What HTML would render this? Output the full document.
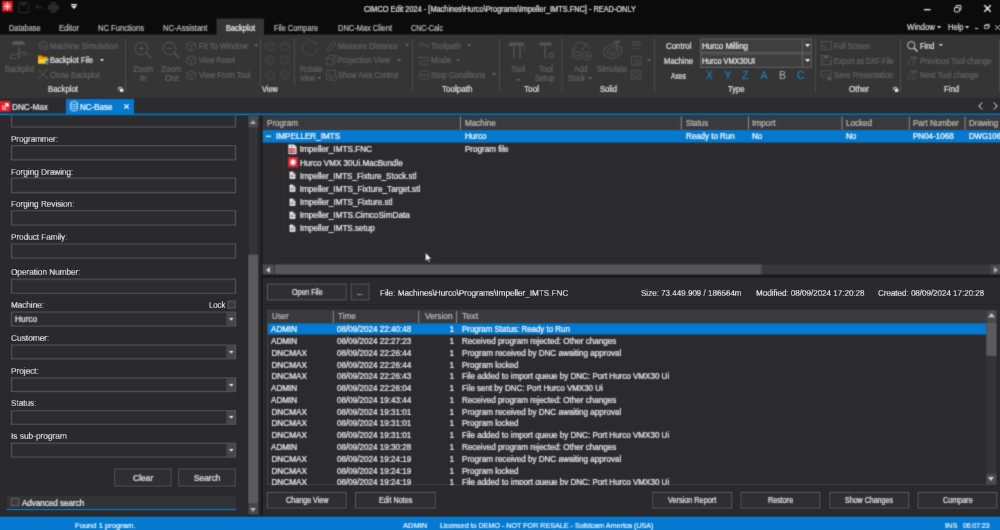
<!DOCTYPE html>
<html lang="en"><head><meta charset="utf-8"><title>CIMCO Edit 2024</title>
<style>
html,body{margin:0;padding:0}
body{width:1000px;height:530px;background:#2a2a2d;overflow:hidden;position:relative;font-family:"Liberation Sans",sans-serif}
#root{position:absolute;left:0;top:0;width:1000px;height:530px;overflow:hidden;filter:url(#soft)}
.a{position:absolute;box-sizing:border-box}
.t{position:absolute;white-space:nowrap;line-height:1;transform-origin:0 50%;-webkit-text-stroke:.22px currentColor}
svg{overflow:visible}
.n{-webkit-text-stroke:0}
</style></head><body><svg width="0" height="0" style="position:absolute"><defs><filter id="soft" x="0" y="0" width="100%" height="100%" color-interpolation-filters="sRGB"><feConvolveMatrix order="3" kernelMatrix="0.0324 0.1152 0.0324 0.1152 0.4096 0.1152 0.0324 0.1152 0.0324" divisor="1" edgeMode="duplicate" preserveAlpha="true"/></filter></defs></svg>
<div id="root">
<svg class="a" style="left:0px;top:0px" width="1000" height="35"><rect x="0" y="0" width="1000" height="35" fill="#0b0b0b"/></svg>
<svg class="a" style="left:1.6px;top:1.4px;" width="10.6" height="10.5" viewBox="0 0 10.6 10.5"><rect width="10.600" height="10.500" fill="#e0131f"/><g stroke="#fff" stroke-width=".85" stroke-linecap="round"><path d="M5.300 2v6.500M2.100 5.250h6.400M3 3l4.600 4.500M7.600 3L3 7.500"/></g><g fill="#fff"><circle cx="5.300" cy="1.700" r=".6"/><circle cx="5.300" cy="8.800" r=".6"/><circle cx="1.800" cy="5.250" r=".6"/><circle cx="8.800" cy="5.250" r=".6"/><circle cx="2.800" cy="2.800" r=".55"/><circle cx="7.800" cy="2.800" r=".55"/><circle cx="2.800" cy="7.700" r=".55"/><circle cx="7.800" cy="7.700" r=".55"/></g></svg>
<svg class="a" style="left:18px;top:2px;" width="11" height="11" viewBox="0 0 11 11"><path d="M1 .5h8l1.5 1.5v8.5h-9.500z" fill="none" stroke="#262626" stroke-width="1"/><rect x="3" y="1" width="5" height="2.500" fill="#262626"/></svg>
<svg class="a" style="left:35px;top:4px;" width="8" height="6" viewBox="0 0 8 6"><path d="M3 0.500L.7 3l2.300 2.500M.7 3h5a2 2 0 0 1 2 2" fill="none" stroke="#303030" stroke-width="1"/></svg>
<svg class="a" style="left:48px;top:2px;" width="11" height="11" viewBox="0 0 11 11"><rect x="0" y="3" width="11" height="5" rx="1" fill="#2b2b2b"/><rect x="2.500" y="0" width="6" height="3" fill="#242424"/><rect x="2.500" y="7" width="6" height="4" fill="#242424"/></svg>
<svg class="a" style="left:71px;top:3.5px;" width="6" height="5" viewBox="0 0 6 5"><rect x="0" y="0" width="6" height="1.200" fill="#eee"/><path d="M0 1.800h6l-3 3.200z" fill="#eee"/></svg>
<span class="t " style="left:364px;top:5px;font-size:8.3px;color:#e4e4e4;transform:scaleX(0.8886);">CIMCO Edit 2024 - [Machines\Hurco\Programs\Impeller_IMTS.FNC] - READ-ONLY</span>
<svg class="a" style="left:924px;top:9px" width="7" height="2"><rect x="0" y="0" width="6.5" height="1.3" fill="#f0f0f0"/></svg>
<svg class="a" style="left:954px;top:5.3px;" width="7.4" height="7.4" viewBox="0 0 7.4 7.4"><path d="M2.300 2V.5h4.600v4.400h-1.400" fill="none" stroke="#ddd" stroke-width="1"/><rect x=".5" y="2.500" width="4.800" height="4.400" rx=".5" fill="none" stroke="#ddd" stroke-width="1"/></svg>
<svg class="a" style="left:984px;top:5px;" width="7" height="7" viewBox="0 0 7 7"><path d="M.3 .3l6.400 6.400M6.700 .3L.3 6.700" stroke="#fff" stroke-width="1.300"/></svg>
<svg class="a" style="left:216px;top:18px" width="48" height="18"><rect x="0.5" y="0.5" width="47.5" height="17" fill="#353535"/></svg>
<span class="t " style="left:8.5px;top:24px;font-size:8.3px;color:#bebebe;transform:scaleX(0.8865);">Database</span>
<span class="t " style="left:59px;top:24px;font-size:8.3px;color:#bebebe;transform:scaleX(0.9224);">Editor</span>
<span class="t " style="left:98px;top:24px;font-size:8.3px;color:#bebebe;transform:scaleX(0.9149);">NC Functions</span>
<span class="t " style="left:163px;top:24px;font-size:8.3px;color:#bebebe;transform:scaleX(0.9189);">NC-Assistant</span>
<span class="t " style="left:226px;top:24px;font-size:8.3px;color:#f0f0f0;transform:scaleX(0.9109);">Backplot</span>
<span class="t " style="left:274px;top:24px;font-size:8.3px;color:#bebebe;transform:scaleX(0.8832);">File Compare</span>
<span class="t " style="left:338px;top:24px;font-size:8.3px;color:#bebebe;transform:scaleX(0.9007);">DNC-Max Client</span>
<span class="t " style="left:411px;top:24px;font-size:8.3px;color:#bebebe;transform:scaleX(0.8567);">CNC-Calc</span>
<span class="t " style="left:907px;top:23px;font-size:8.3px;color:#dcdcdc;transform:scaleX(0.9485);">Window</span>
<span class="t " style="left:947.5px;top:23px;font-size:8.3px;color:#dcdcdc;transform:scaleX(0.9080);">Help</span>
<svg class="a" style="left:937px;top:25.95px;" width="4.2" height="2.5" viewBox="0 0 4.2 2.5"><path d="M0 0h4.2l-2.1 2.5z" fill="#dcdcdc"/></svg>
<svg class="a" style="left:965px;top:25.95px;" width="4.2" height="2.5" viewBox="0 0 4.2 2.5"><path d="M0 0h4.2l-2.1 2.5z" fill="#dcdcdc"/></svg>
<svg class="a" style="left:975px;top:28px" width="4" height="1"><rect x="0" y="0" width="3.2" height="1" fill="#ccc"/></svg>
<svg class="a" style="left:984px;top:24px;" width="6" height="5" viewBox="0 0 6 5"><path d="M1.500 1.300V.5h3.800v3h-.8" fill="none" stroke="#ccc" stroke-width=".8"/><rect x=".4" y="1.500" width="3.800" height="3" fill="none" stroke="#ccc" stroke-width=".8"/></svg>
<svg class="a" style="left:995px;top:24.5px;" width="5" height="5" viewBox="0 0 5 5"><path d="M.3 .3l4.400 4.400M4.700 .3L.3 4.700" stroke="#ddd" stroke-width="1"/></svg>
<svg class="a" style="left:0px;top:34px" width="1000" height="64"><rect x="0" y="0.5" width="1000" height="63.5" fill="#353535"/></svg>
<svg class="a" style="left:125px;top:39px" width="1" height="53"><rect x="0" y="0" width="1" height="53" fill="#4b4b4b"/></svg>
<svg class="a" style="left:412px;top:39px" width="1" height="53"><rect x="0" y="0" width="1" height="53" fill="#4b4b4b"/></svg>
<svg class="a" style="left:499px;top:39px" width="1" height="53"><rect x="0" y="0" width="1" height="53" fill="#4b4b4b"/></svg>
<svg class="a" style="left:561px;top:39px" width="2" height="53"><rect x="0.5" y="0" width="1" height="53" fill="#4b4b4b"/></svg>
<svg class="a" style="left:654px;top:39px" width="1" height="53"><rect x="0" y="0" width="1" height="53" fill="#4b4b4b"/></svg>
<svg class="a" style="left:815px;top:39px" width="1" height="53"><rect x="0" y="0" width="1" height="53" fill="#4b4b4b"/></svg>
<svg class="a" style="left:900px;top:39px" width="1" height="53"><rect x="0" y="0" width="1" height="53" fill="#4b4b4b"/></svg>
<svg class="a" style="left:999px;top:39px" width="1" height="53"><rect x="0" y="0" width="1" height="53" fill="#4b4b4b"/></svg>
<svg class="a" style="left:260px;top:38px" width="1" height="47"><rect x="0" y="0.5" width="1" height="46" fill="#4b4b4b"/></svg>
<svg class="a" style="left:294px;top:38px" width="1" height="47"><rect x="0" y="0.5" width="1" height="46" fill="#4b4b4b"/></svg>
<span class="t " style="left:5px;top:65px;font-size:8.3px;color:#636363;transform:scaleX(0.9109);">Backplot</span>
<span class="t " style="left:50px;top:42px;font-size:8.3px;color:#636363;transform:scaleX(0.9388);">Machine Simulation</span>
<span class="t " style="left:50px;top:56px;font-size:8.3px;color:#e6e6e6;transform:scaleX(0.9050);">Backplot File</span>
<svg class="a" style="left:99.5px;top:58.8px;" width="4" height="2.4" viewBox="0 0 4 2.4"><path d="M0 0h4l-2.0 2.4z" fill="#e0e0e0"/></svg>
<span class="t " style="left:50px;top:71px;font-size:8.3px;color:#636363;transform:scaleX(0.8941);">Close Backplot</span>
<span class="t " style="left:48px;top:85px;font-size:8.3px;color:#e0e0e0;transform:scaleX(0.9424);">Backplot</span>
<svg class="a" style="left:10px;top:40px;" width="18" height="20" viewBox="0 0 18 20"><path d="M3.300 1.200h10.400l1.300 3.600h-13z" fill="#5a5a5a"/><path d="M8.900 6.800v11.800" stroke="#525252" stroke-width="1.700"/><path d="M8.900 12.500h6.800a1.250 1.250 0 0 1 0 2.500h-4.500M8.900 14.500h-6.400a2 2 0 0 0 0 4h4.500" fill="none" stroke="#525252" stroke-width="1.100"/></svg>
<svg class="a" style="left:38px;top:41px;" width="10.5" height="10.5" viewBox="0 0 10.5 10.5"><path d="M1 2l4-1.500 4.500 2.500v4.500l-4 2-4.500-3z" fill="none" stroke="#565656" stroke-width=".9"/><circle cx="3.800" cy="4.500" r="1.200" fill="none" stroke="#565656" stroke-width=".7"/><circle cx="6.800" cy="6.200" r="1.200" fill="none" stroke="#565656" stroke-width=".7"/></svg>
<svg class="a" style="left:38px;top:55px;" width="11" height="10" viewBox="0 0 11 10"><path d="M0 .6h3.800l1 1.200h4.700v2h-9.500z" fill="#d9a000"/><path d="M0 8.400V2.500h1l.8 1h8.700l-1.800 4.900z" fill="#f2b800"/><path d="M0 8.400l1.900-4.400h8.900l-2 4.400z" fill="#ffca28"/><rect x="7.500" y="5.600" width="3.200" height="3.200" fill="#1d7fd6"/><path d="M9.100 8.800v1.200" stroke="#aaa" stroke-width=".8"/></svg>
<svg class="a" style="left:38.3px;top:69.2px;" width="10" height="10" viewBox="0 0 10 10"><path d="M0 0l10 10M10 0L0 10" stroke="#565656" stroke-width=".9"/></svg>
<svg class="a" style="left:117.5px;top:86.5px;" width="5.5" height="5" viewBox="0 0 5.5 5"><path d="M.4 3V.4h3.600" fill="none" stroke="#d8d8d8" stroke-width=".8"/><rect x="1.800" y="1.600" width="3.500" height="3.300" fill="#eee"/></svg>
<svg class="a" style="left:134.4px;top:40.5px;" width="18" height="18" viewBox="0 0 18 18"><circle cx="7.500" cy="7.500" r="6.300" fill="none" stroke="#565656" stroke-width="1"/><path d="M12 12l5.200 5.200" stroke="#565656" stroke-width="1.300"/><path d="M4.600 7.500h5.800" stroke="#565656" stroke-width=".9"/><path d="M7.500 4.600v5.800" stroke="#565656" stroke-width=".9"/></svg>
<svg class="a" style="left:161.9px;top:40.5px;" width="18" height="18" viewBox="0 0 18 18"><circle cx="7.500" cy="7.500" r="6.300" fill="none" stroke="#565656" stroke-width="1"/><path d="M12 12l5.200 5.200" stroke="#565656" stroke-width="1.300"/><path d="M4.600 7.500h5.800" stroke="#565656" stroke-width=".9"/></svg>
<span class="t " style="left:133px;top:65px;font-size:8.3px;color:#636363;transform:scaleX(0.9662);">Zoom</span>
<span class="t " style="left:140.3px;top:74px;font-size:8.3px;color:#636363;transform:scaleX(0.9679);">In</span>
<span class="t " style="left:160.5px;top:65px;font-size:8.3px;color:#636363;transform:scaleX(0.9662);">Zoom</span>
<span class="t " style="left:164.5px;top:74px;font-size:8.3px;color:#636363;transform:scaleX(1.0091);">Out</span>
<svg class="a" style="left:186px;top:41px;" width="10.5" height="10.5" viewBox="0 0 10 10"><path d="M5 .6l4.200 2.200v4.600L5 9.600.8 7.400V2.800z" fill="none" stroke="#565656" stroke-width=".8"/><path d="M.8 2.800L5 5l4.200-2.200M5 5v4.600" fill="none" stroke="#565656" stroke-width=".7"/></svg>
<svg class="a" style="left:186px;top:55px;" width="10.5" height="10.5" viewBox="0 0 10 10"><path d="M5 .6l4.200 2.200v4.600L5 9.600.8 7.400V2.800z" fill="none" stroke="#565656" stroke-width=".8"/><path d="M.8 2.800L5 5l4.200-2.200M5 5v4.600" fill="none" stroke="#565656" stroke-width=".7"/></svg>
<svg class="a" style="left:186px;top:69.5px;" width="10.5" height="10.5" viewBox="0 0 10 10"><path d="M5 .6l4.200 2.200v4.600L5 9.600.8 7.400V2.800z" fill="none" stroke="#565656" stroke-width=".8"/><path d="M.8 2.800L5 5l4.200-2.200M5 5v4.600" fill="none" stroke="#565656" stroke-width=".7"/></svg>
<span class="t " style="left:198.5px;top:42px;font-size:8.3px;color:#636363;transform:scaleX(0.9332);">Fit To Window</span>
<svg class="a" style="left:253.5px;top:44.15px;" width="4.2" height="2.5" viewBox="0 0 4.2 2.5"><path d="M0 0h4.2l-2.1 2.5z" fill="#636363"/></svg>
<span class="t " style="left:198.5px;top:56px;font-size:8.3px;color:#636363;transform:scaleX(0.8606);">View Reset</span>
<span class="t " style="left:198.5px;top:71px;font-size:8.3px;color:#636363;transform:scaleX(0.9052);">View From Tool</span>
<svg class="a" style="left:264.5px;top:41px;" width="10" height="10" viewBox="0 0 10 10"><path d="M5 .6l4.200 2.200v4.600L5 9.600.8 7.400V2.800z" fill="none" stroke="#4b4b4b" stroke-width=".8"/><path d="M.8 2.800L5 5l4.200-2.200M5 5v4.600" fill="none" stroke="#4b4b4b" stroke-width=".7"/></svg>
<svg class="a" style="left:264.5px;top:55px;" width="10" height="10" viewBox="0 0 10 10"><path d="M5 .6l4.200 2.200v4.600L5 9.600.8 7.400V2.800z" fill="none" stroke="#4b4b4b" stroke-width=".8"/><path d="M.8 2.800L5 5l4.200-2.200M5 5v4.600" fill="none" stroke="#4b4b4b" stroke-width=".7"/></svg>
<svg class="a" style="left:264.5px;top:69.5px;" width="10" height="10" viewBox="0 0 10 10"><path d="M5 .6l4.200 2.200v4.600L5 9.600.8 7.400V2.800z" fill="none" stroke="#4b4b4b" stroke-width=".8"/><path d="M5 2.500V5.500l-3 1.500" fill="none" stroke="#4b4b4b" stroke-width=".7"/></svg>
<svg class="a" style="left:279.5px;top:41px;" width="10" height="10" viewBox="0 0 10 10"><path d="M5 .6l4.200 2.200v4.600L5 9.600.8 7.400V2.800z" fill="none" stroke="#4b4b4b" stroke-width=".8"/><path d="M.8 4.800L5 2.800l4.200 2" fill="none" stroke="#4b4b4b" stroke-width=".7"/></svg>
<svg class="a" style="left:279.5px;top:55px;" width="10" height="10" viewBox="0 0 10 10"><path d="M5 .6l4.200 2.200v4.600L5 9.600.8 7.400V2.800z" fill="none" stroke="#4b4b4b" stroke-width=".8"/><path d="M5 2.500V5.500l3 1.500" fill="none" stroke="#4b4b4b" stroke-width=".7"/></svg>
<svg class="a" style="left:279.5px;top:69.5px;" width="10" height="10" viewBox="0 0 10 10"><path d="M5 .6l4.200 2.200v4.600L5 9.600.8 7.400V2.800z" fill="none" stroke="#4b4b4b" stroke-width=".8"/><path d="M.8 2.800L5 5l4.200-2.200M5 5v4.600" fill="none" stroke="#4b4b4b" stroke-width=".7"/></svg>
<svg class="a" style="left:301px;top:40px;" width="19" height="18" viewBox="0 0 19 18"><path d="M14.800 3.500A7.300 7.300 0 1 0 16.300 9" fill="none" stroke="#4b4b4b" stroke-width=".9"/><path d="M12 3.800h3.300V.6" fill="none" stroke="#4b4b4b" stroke-width=".9"/></svg>
<span class="t " style="left:299.5px;top:65px;font-size:8.3px;color:#636363;transform:scaleX(0.9201);">Rotate</span>
<span class="t " style="left:299.5px;top:74px;font-size:8.3px;color:#636363;transform:scaleX(0.8408);">View</span>
<svg class="a" style="left:316.5px;top:77.45px;" width="4.2" height="2.5" viewBox="0 0 4.2 2.5"><path d="M0 0h4.2l-2.1 2.5z" fill="#636363"/></svg>
<svg class="a" style="left:326px;top:41px;" width="10.5" height="10.5" viewBox="0 0 10.5 10.5"><path d="M.6 7.600L7.600.6l2.300 2.300-7 7z" fill="none" stroke="#565656" stroke-width=".9"/></svg>
<svg class="a" style="left:326px;top:55px;" width="10.5" height="10.5" viewBox="0 0 10.5 10.5"><path d="M.5 3.500h6.500v6.500h-6.500zM.5 3.500l3-3h6.500v6.500l-3 3M7 3.500l3-3" fill="none" stroke="#565656" stroke-width=".8"/></svg>
<svg class="a" style="left:326px;top:69.5px;" width="10.5" height="10.5" viewBox="0 0 10.5 10.5"><rect x=".5" y=".5" width="9" height="9.500" fill="none" stroke="#565656" stroke-width=".8"/><path d="M3.500 2.500v5h4.500" fill="none" stroke="#565656" stroke-width=".8"/><rect x="6.800" y="6.800" width="3.500" height="3.500" fill="#353535" stroke="#565656" stroke-width=".6"/></svg>
<span class="t " style="left:338px;top:42px;font-size:8.3px;color:#636363;transform:scaleX(0.8970);">Measure Distance</span>
<svg class="a" style="left:405px;top:44.15px;" width="4.2" height="2.5" viewBox="0 0 4.2 2.5"><path d="M0 0h4.2l-2.1 2.5z" fill="#636363"/></svg>
<span class="t " style="left:338px;top:56px;font-size:8.3px;color:#636363;transform:scaleX(0.9114);">Projection View</span>
<svg class="a" style="left:397px;top:58.75px;" width="4.2" height="2.5" viewBox="0 0 4.2 2.5"><path d="M0 0h4.2l-2.1 2.5z" fill="#636363"/></svg>
<span class="t " style="left:338px;top:71px;font-size:8.3px;color:#636363;transform:scaleX(0.8982);">Show Axis Control</span>
<span class="t " style="left:262px;top:85px;font-size:8.3px;color:#e0e0e0;transform:scaleX(0.8968);">View</span>
<svg class="a" style="left:419px;top:41.5px;" width="10.5" height="8" viewBox="0 0 10.5 8"><path d="M.5 2.500c0-1.800 2.500-2.400 4-.8l2 3c1.500 1.600 3.500 1 3.500-.8M.5 2.500c0 1.800 2 2.400 3.500 1.200M10 3.900c0-1.800-2-2.400-3.500-1.200" fill="none" stroke="#565656" stroke-width=".9"/></svg>
<svg class="a" style="left:419px;top:55.5px;" width="10.5" height="9" viewBox="0 0 10.5 9"><path d="M.5 1.500h7a1.800 1.800 0 0 1 0 3.600h-5a1.800 1.800 0 0 0 0 3.600h7" fill="none" stroke="#565656" stroke-width=".9"/><path d="M.5 .3v2.400" stroke="#565656" stroke-width=".9"/></svg>
<svg class="a" style="left:419px;top:69.5px;" width="10.5" height="10.5" viewBox="0 0 10.5 10.5"><circle cx="5.200" cy="5.200" r="4.600" fill="none" stroke="#565656" stroke-width=".9"/><path d="M2.500 5.200h5.400" stroke="#565656" stroke-width="1"/></svg>
<span class="t " style="left:431px;top:42px;font-size:8.3px;color:#636363;transform:scaleX(0.9560);">Toolpath</span>
<svg class="a" style="left:466.5px;top:43.95px;" width="4.2" height="2.5" viewBox="0 0 4.2 2.5"><path d="M0 0h4.2l-2.1 2.5z" fill="#636363"/></svg>
<span class="t " style="left:431px;top:56px;font-size:8.3px;color:#636363;transform:scaleX(0.9633);">Mode</span>
<svg class="a" style="left:456px;top:58.75px;" width="4.2" height="2.5" viewBox="0 0 4.2 2.5"><path d="M0 0h4.2l-2.1 2.5z" fill="#636363"/></svg>
<span class="t " style="left:431px;top:71px;font-size:8.3px;color:#636363;transform:scaleX(0.9300);">Stop Conditions</span>
<svg class="a" style="left:491.5px;top:72.65px;" width="4.2" height="2.5" viewBox="0 0 4.2 2.5"><path d="M0 0h4.2l-2.1 2.5z" fill="#636363"/></svg>
<span class="t " style="left:442px;top:85px;font-size:8.3px;color:#e0e0e0;transform:scaleX(0.9719);">Toolpath</span>
<svg class="a" style="left:508px;top:40.5px;" width="18" height="18" viewBox="0 0 18 18"><path d="M2 1.500h13l1.500 3H.5z" fill="#565656"/><path d="M6 5v12M12 5v12" stroke="#4d4d4d" stroke-width="1.900"/><path d="M.5 4.500h4M13 4.500c3 0 4.500 1 4.500 3l-2 2" fill="none" stroke="#565656" stroke-width=".8"/></svg>
<svg class="a" style="left:538.5px;top:40.5px;" width="18" height="18" viewBox="0 0 18 18"><path d="M1 1.500h11l1 3H0z" fill="#565656"/><path d="M6 5v12" stroke="#4d4d4d" stroke-width="1.900"/><circle cx="12.500" cy="14.500" r="2.600" fill="none" stroke="#565656" stroke-width="1.400" stroke-dasharray="1.300 .9"/><circle cx="12.500" cy="14.500" r="1.800" fill="none" stroke="#565656" stroke-width=".6"/></svg>
<span class="t " style="left:511px;top:65px;font-size:8.3px;color:#636363;transform:scaleX(0.9194);">Tool</span>
<svg class="a" style="left:515.5px;top:79.25px;" width="4.2" height="2.5" viewBox="0 0 4.2 2.5"><path d="M0 0h4.2l-2.1 2.5z" fill="#636363"/></svg>
<span class="t " style="left:538.5px;top:65px;font-size:8.3px;color:#636363;transform:scaleX(0.9194);">Tool</span>
<span class="t " style="left:535px;top:74px;font-size:8.3px;color:#636363;transform:scaleX(0.8990);">Setup</span>
<span class="t " style="left:524px;top:85px;font-size:8.3px;color:#e0e0e0;transform:scaleX(0.9851);">Tool</span>
<svg class="a" style="left:571px;top:40px;" width="21" height="21" viewBox="0 0 21 21"><path d="M1.500 10L7 1.800l8 2 3.500 4.500M1.500 10l8 3 5.500-9.200M1.500 10v6.500l7.500 3.300M9.500 13v3.500M2 13.500l7.500 3" fill="none" stroke="#565656" stroke-width=".9"/><circle cx="15.800" cy="16" r="4.300" fill="#353535" stroke="#565656" stroke-width=".9"/><path d="M13.600 16h4.400M15.800 13.800v4.400" stroke="#565656" stroke-width=".9"/></svg>
<svg class="a" style="left:603px;top:40px;" width="20" height="20" viewBox="0 0 20 20"><path d="M.8 9l8.200-5.500 9.300 3.500v6.500l-9 5.500-8.500-4z" fill="none" stroke="#565656" stroke-width=".9"/><path d="M4 10.500l6-3.500 5.500 2.500v2.500l-6 3.500-5.500-2.500z" fill="none" stroke="#565656" stroke-width=".8"/><path d="M4 10.500l5.500 2.500 6-3.500M9.500 13v2.500" fill="none" stroke="#565656" stroke-width=".6"/><rect x="11" y=".8" width="6.200" height="2" fill="#565656"/><path d="M14 3v7" stroke="#565656" stroke-width="1"/></svg>
<span class="t " style="left:573.5px;top:65px;font-size:8.3px;color:#636363;transform:scaleX(0.9141);">Add</span>
<span class="t " style="left:568px;top:74px;font-size:8.3px;color:#636363;transform:scaleX(0.8189);">Stock</span>
<svg class="a" style="left:587.5px;top:76.65px;" width="4.2" height="2.5" viewBox="0 0 4.2 2.5"><path d="M0 0h4.2l-2.1 2.5z" fill="#636363"/></svg>
<span class="t " style="left:597px;top:65px;font-size:8.3px;color:#636363;transform:scaleX(0.9290);">Simulate</span>
<span class="t " style="left:600px;top:85px;font-size:8.3px;color:#e0e0e0;transform:scaleX(0.9211);">Solid</span>
<svg class="a" style="left:631px;top:41px;" width="10.5" height="9" viewBox="0 0 10.5 9"><circle cx="3" cy="2.500" r="2" fill="none" stroke="#565656" stroke-width=".8"/><circle cx="7.500" cy="2.500" r="2" fill="none" stroke="#565656" stroke-width=".8"/><path d="M1.500 7.500h7.500" stroke="#565656" stroke-width=".8" stroke-dasharray="1.500 1"/></svg>
<svg class="a" style="left:631px;top:55.5px;" width="10.5" height="10" viewBox="0 0 10.5 10"><rect x=".5" y=".5" width="9.500" height="8.500" fill="none" stroke="#565656" stroke-width=".8"/><circle cx="5.500" cy="5" r="2" fill="none" stroke="#565656" stroke-width=".8"/><path d="M7 6.500l2 2" stroke="#565656" stroke-width=".8"/></svg>
<svg class="a" style="left:631px;top:70px;" width="10.5" height="10" viewBox="0 0 10.5 10"><rect x=".5" y=".5" width="9.500" height="8.500" fill="none" stroke="#565656" stroke-width=".8"/><circle cx="5.200" cy="4.800" r="2.600" fill="none" stroke="#565656" stroke-width=".8"/></svg>
<svg class="a" style="left:646.5px;top:58.75px;" width="4.2" height="2.5" viewBox="0 0 4.2 2.5"><path d="M0 0h4.2l-2.1 2.5z" fill="#636363"/></svg>
<span class="t " style="left:666px;top:42px;font-size:8.3px;color:#e6e6e6;transform:scaleX(0.9530);">Control</span>
<span class="t " style="left:664px;top:57px;font-size:8.3px;color:#e6e6e6;transform:scaleX(0.9244);">Machine</span>
<span class="t " style="left:671px;top:72px;font-size:8.3px;color:#e6e6e6;transform:scaleX(0.8129);">Axes</span>
<svg class="a" style="left:700px;top:38px" width="112" height="15"><rect x="0" y="0.5" width="112" height="14.5" fill="#3f3f3f"/><rect x="0.5" y="1" width="111" height="13.5" fill="none" stroke="#5e5e5e" stroke-width="1"/></svg>
<svg class="a" style="left:802px;top:38px" width="1" height="15"><rect x="0" y="0.5" width="1" height="14.5" fill="#5e5e5e"/></svg>
<svg class="a" style="left:700px;top:53px" width="112" height="15"><rect x="0" y="0.5" width="112" height="14.5" fill="#3f3f3f"/><rect x="0.5" y="1" width="111" height="13.5" fill="none" stroke="#5e5e5e" stroke-width="1"/></svg>
<svg class="a" style="left:802px;top:53px" width="1" height="15"><rect x="0" y="0.5" width="1" height="14.5" fill="#5e5e5e"/></svg>
<svg class="a" style="left:804.6px;top:44.2px;" width="5.2" height="3" viewBox="0 0 5.2 3"><path d="M0 0h5.2l-2.6 3z" fill="#f0f0f0"/></svg>
<svg class="a" style="left:804.6px;top:59.2px;" width="5.2" height="3" viewBox="0 0 5.2 3"><path d="M0 0h5.2l-2.6 3z" fill="#f0f0f0"/></svg>
<span class="t " style="left:702px;top:42px;font-size:8.3px;color:#ededed;transform:scaleX(0.9589);">Hurco Milling</span>
<span class="t " style="left:702px;top:57px;font-size:8.3px;color:#ededed;transform:scaleX(0.8838);">Hurco VMX30UI</span>
<span class="t n" style="left:706px;top:71px;font-size:10.4px;color:#1b88d2;">X</span>
<span class="t n" style="left:724.5px;top:71px;font-size:10.4px;color:#1b88d2;">Y</span>
<span class="t n" style="left:742px;top:71px;font-size:10.4px;color:#1b88d2;">Z</span>
<span class="t n" style="left:760.5px;top:71px;font-size:10.4px;color:#1b88d2;">A</span>
<span class="t n" style="left:779px;top:71px;font-size:10.4px;color:#b4b4b4;">B</span>
<span class="t n" style="left:797px;top:71px;font-size:10.4px;color:#1b88d2;">C</span>
<span class="t " style="left:727.5px;top:85px;font-size:8.3px;color:#e0e0e0;transform:scaleX(0.9169);">Type</span>
<svg class="a" style="left:821px;top:41px;" width="11" height="9.5" viewBox="0 0 11 9.5"><rect x=".5" y=".5" width="10" height="8" fill="none" stroke="#565656" stroke-width=".8"/><path d="M.5 5.500h4.500v3" fill="none" stroke="#565656" stroke-width=".8"/></svg>
<svg class="a" style="left:821px;top:55px;" width="11" height="10.5" viewBox="0 0 11 10.5"><path d="M.5 .5h8.500l1.500 1.500v8h-10z" fill="none" stroke="#565656" stroke-width=".8"/><rect x="2.500" y=".8" width="5" height="2.500" fill="#565656"/><rect x="1.800" y="5.800" width="7.400" height="3.600" fill="none" stroke="#565656" stroke-width=".6"/></svg>
<svg class="a" style="left:821px;top:69.5px;" width="11" height="10.5" viewBox="0 0 11 10.5"><path d="M.5 .5h9.500v5M.5 .5v6.500h4" fill="none" stroke="#565656" stroke-width=".8"/><path d="M2.500 5l2-2 2 1.500" fill="none" stroke="#565656" stroke-width=".7"/><rect x="6.500" y="7" width="4" height="3.300" fill="#565656"/><path d="M7.300 7v-1a1.200 1.200 0 0 1 2.400 0v1" fill="none" stroke="#565656" stroke-width=".7"/></svg>
<span class="t " style="left:834px;top:42px;font-size:8.3px;color:#636363;transform:scaleX(0.8576);">Full Screen</span>
<span class="t " style="left:834px;top:57px;font-size:8.3px;color:#636363;transform:scaleX(0.8543);">Export as DXF File</span>
<span class="t " style="left:834px;top:71px;font-size:8.3px;color:#636363;transform:scaleX(0.8698);">Save Presentation</span>
<span class="t " style="left:849px;top:85px;font-size:8.3px;color:#e0e0e0;transform:scaleX(0.9635);">Other</span>
<svg class="a" style="left:893px;top:86.8px;" width="5.5" height="5" viewBox="0 0 5.5 5"><path d="M.4 3V.4h3.600" fill="none" stroke="#d8d8d8" stroke-width=".8"/><rect x="1.800" y="1.600" width="3.500" height="3.300" fill="#eee"/></svg>
<svg class="a" style="left:907px;top:41px;" width="11" height="11" viewBox="0 0 11 11"><circle cx="4.300" cy="4.300" r="3.700" fill="none" stroke="#d8d8d8" stroke-width=".9"/><path d="M7 7l3.500 3.500" stroke="#d8d8d8" stroke-width="1.200"/></svg>
<span class="t " style="left:919.5px;top:42px;font-size:8.3px;color:#e6e6e6;transform:scaleX(0.8980);">Find</span>
<svg class="a" style="left:938.5px;top:44.25px;" width="3.8" height="2.3" viewBox="0 0 3.8 2.3"><path d="M0 0h3.8l-1.9 2.3z" fill="#e0e0e0"/></svg>
<svg class="a" style="left:907px;top:55.5px;" width="11" height="10.5" viewBox="0 0 11 10.5"><path d="M3.600 .4h6l.9 2.300H2.700z" fill="#505050"/><path d="M5.300 3v7.300M8 3v7.300" stroke="#4a4a4a" stroke-width="1"/><path d="M1.500 9.500v-5M.3 6l1.200-1.500L2.700 6" fill="none" stroke="#505050" stroke-width=".7"/></svg>
<svg class="a" style="left:907px;top:70px;" width="11" height="10.5" viewBox="0 0 11 10.5"><path d="M3.600 .4h6l.9 2.300H2.700z" fill="#505050"/><path d="M5.300 3v7.300M8 3v7.300" stroke="#4a4a4a" stroke-width="1"/><path d="M1.500 4.500v5M.3 8l1.200 1.500L2.700 8" fill="none" stroke="#505050" stroke-width=".7"/></svg>
<span class="t " style="left:919.5px;top:57px;font-size:8.3px;color:#636363;transform:scaleX(0.9026);">Previous Tool change</span>
<span class="t " style="left:919.5px;top:71px;font-size:8.3px;color:#636363;transform:scaleX(0.9143);">Next Tool change</span>
<span class="t " style="left:944px;top:85px;font-size:8.3px;color:#e0e0e0;transform:scaleX(0.9290);">Find</span>
<svg class="a" style="left:0px;top:98px" width="1000" height="16"><rect x="0" y="0" width="1000" height="16" fill="#2b2b2e"/></svg>
<svg class="a" style="left:0px;top:113px" width="1000" height="3"><rect x="0" y="0.6" width="1000" height="1.8" fill="#0479cf"/></svg>
<svg class="a" style="left:0px;top:101.3px;" width="10.5" height="10.7" viewBox="0 0 10.5 10.7"><rect width="10.500" height="10.700" fill="#e0202c"/><path d="M4.800 2.800h3.200v3.200M8 2.800L4.300 6.500" fill="none" stroke="#fff" stroke-width="1.200"/><path d="M2.800 4.300v3.900h3.900" fill="none" stroke="#fff" stroke-width=".9"/></svg>
<span class="t " style="left:12px;top:103px;font-size:8.4px;color:#ececec;transform:scaleX(0.9765);">DNC-Max</span>
<svg class="a" style="left:66px;top:99px" width="68" height="15"><rect x="0" y="0" width="68" height="15" fill="#0479cf"/></svg>
<svg class="a" style="left:69.5px;top:101px;" width="8" height="10.5" viewBox="0 0 8 10.5"><ellipse cx="4" cy="2" rx="3.400" ry="1.500" fill="none" stroke="#e8f2fb" stroke-width=".8"/><path d="M.6 2v6.500c0 .9 1.500 1.500 3.400 1.500s3.400-.6 3.400-1.500V2M.6 4.200c0 .9 1.500 1.500 3.400 1.500s3.400-.6 3.400-1.500M.6 6.400c0 .9 1.500 1.500 3.400 1.500s3.400-.6 3.400-1.500" fill="none" stroke="#e8f2fb" stroke-width=".8"/></svg>
<span class="t " style="left:80px;top:103px;font-size:8.4px;color:#ffffff;transform:scaleX(0.9537);">NC-Base</span>
<svg class="a" style="left:124px;top:104px;" width="5" height="5" viewBox="0 0 5 5"><path d="M.3 .3l4.400 4.400M4.700 .3L.3 4.700" stroke="#fff" stroke-width="1.200"/></svg>
<svg class="a" style="left:977.5px;top:102px;" width="5" height="8" viewBox="0 0 5 8"><path d="M4.300 .5L.8 4l3.500 3.500" fill="none" stroke="#f0f0f0" stroke-width="1"/></svg>
<svg class="a" style="left:992.5px;top:102px;" width="5" height="8" viewBox="0 0 5 8"><path d="M.7 .5L4.200 4 .7 7.500" fill="none" stroke="#f0f0f0" stroke-width="1"/></svg>
<svg class="a" style="left:10px;top:115px" width="227" height="13"><rect x="0.8" y="0.5" width="225.4" height="12.2" fill="#2c2c2f"/><path d="M1.3 0.5V12.2H225.7V0.5" fill="none" stroke="#656567" stroke-width="1"/></svg>
<span class="t " style="left:11px;top:136px;font-size:8.2px;color:#e4e4e4;transform:scaleX(0.9823);">Programmer:</span>
<svg class="a" style="left:10px;top:145px" width="227" height="16"><rect x="0.8" y="0" width="225.4" height="15.5" fill="#2c2c2f"/><rect x="1.3" y="0.5" width="224.4" height="14.5" fill="none" stroke="#656567" stroke-width="1"/></svg>
<span class="t " style="left:11px;top:169px;font-size:8.2px;color:#e4e4e4;">Forging Drawing:</span>
<svg class="a" style="left:10px;top:177px" width="227" height="17"><rect x="0.8" y="0.3" width="225.4" height="16" fill="#2c2c2f"/><rect x="1.3" y="0.8" width="224.4" height="15" fill="none" stroke="#656567" stroke-width="1"/></svg>
<span class="t " style="left:11px;top:201px;font-size:8.2px;color:#e4e4e4;transform:scaleX(0.9952);">Forging Revision:</span>
<svg class="a" style="left:10px;top:210px" width="227" height="16"><rect x="0.8" y="0" width="225.4" height="15.7" fill="#2c2c2f"/><rect x="1.3" y="0.5" width="224.4" height="14.7" fill="none" stroke="#656567" stroke-width="1"/></svg>
<span class="t " style="left:11px;top:234px;font-size:8.2px;color:#e4e4e4;transform:scaleX(0.9919);">Product Family:</span>
<svg class="a" style="left:10px;top:243px" width="227" height="16"><rect x="0.8" y="0.2" width="225.4" height="15.6" fill="#2c2c2f"/><rect x="1.3" y="0.7" width="224.4" height="14.6" fill="none" stroke="#656567" stroke-width="1"/></svg>
<span class="t " style="left:11px;top:269px;font-size:8.2px;color:#e4e4e4;">Operation Number:</span>
<svg class="a" style="left:10px;top:278px" width="227" height="16"><rect x="0.8" y="0.5" width="225.4" height="15.5" fill="#2c2c2f"/><rect x="1.3" y="1" width="224.4" height="14.5" fill="none" stroke="#656567" stroke-width="1"/></svg>
<span class="t " style="left:11px;top:302px;font-size:8.2px;color:#e4e4e4;transform:scaleX(0.9918);">Machine:</span>
<span class="t " style="left:209.2px;top:302px;font-size:8.2px;color:#e4e4e4;transform:scaleX(0.9468);">Lock</span>
<svg class="a" style="left:227px;top:300px" width="9" height="9"><rect x="0.2" y="0.4" width="8.8" height="8.4" fill="#3a3a3c"/><rect x="0.7" y="0.9" width="7.8" height="7.4" fill="none" stroke="#656567" stroke-width="1"/></svg>
<svg class="a" style="left:10px;top:311px" width="227" height="16"><rect x="0.8" y="0.4" width="225.4" height="15.4" fill="#2c2c2f"/><rect x="1.3" y="0.9" width="224.4" height="14.4" fill="none" stroke="#656567" stroke-width="1"/></svg>
<svg class="a" style="left:226px;top:312px" width="10" height="14"><rect x="0.2" y="0.4" width="9" height="13.4" fill="#464648"/></svg>
<svg class="a" style="left:228.8px;top:318.0px;" width="4.6" height="2.6" viewBox="0 0 4.6 2.6"><path d="M0 0h4.6l-2.3 2.6z" fill="#f0f0f0"/></svg>
<span class="t " style="left:14.5px;top:316px;font-size:8.2px;color:#f0f0f0;transform:scaleX(1.0058);">Hurco</span>
<span class="t " style="left:11px;top:335px;font-size:8.2px;color:#e4e4e4;transform:scaleX(1.0179);">Customer:</span>
<svg class="a" style="left:10px;top:344px" width="227" height="16"><rect x="0.8" y="0.4" width="225.4" height="15.1" fill="#2c2c2f"/><rect x="1.3" y="0.9" width="224.4" height="14.1" fill="none" stroke="#656567" stroke-width="1"/></svg>
<svg class="a" style="left:226px;top:345px" width="10" height="14"><rect x="0.2" y="0.4" width="9" height="13.1" fill="#464648"/></svg>
<svg class="a" style="left:228.8px;top:350.84999999999997px;" width="4.6" height="2.6" viewBox="0 0 4.6 2.6"><path d="M0 0h4.6l-2.3 2.6z" fill="#f0f0f0"/></svg>
<span class="t " style="left:11px;top:368px;font-size:8.2px;color:#e4e4e4;transform:scaleX(1.0072);">Project:</span>
<svg class="a" style="left:10px;top:377px" width="227" height="16"><rect x="0.8" y="0.2" width="225.4" height="15" fill="#2c2c2f"/><rect x="1.3" y="0.7" width="224.4" height="14" fill="none" stroke="#656567" stroke-width="1"/></svg>
<svg class="a" style="left:226px;top:378px" width="10" height="14"><rect x="0.2" y="0.2" width="9" height="13" fill="#464648"/></svg>
<svg class="a" style="left:228.8px;top:383.59999999999997px;" width="4.6" height="2.6" viewBox="0 0 4.6 2.6"><path d="M0 0h4.6l-2.3 2.6z" fill="#f0f0f0"/></svg>
<span class="t " style="left:11px;top:400px;font-size:8.2px;color:#e4e4e4;">Status:</span>
<svg class="a" style="left:10px;top:410px" width="227" height="15"><rect x="0.8" y="0" width="225.4" height="15" fill="#2c2c2f"/><rect x="1.3" y="0.5" width="224.4" height="14" fill="none" stroke="#656567" stroke-width="1"/></svg>
<svg class="a" style="left:226px;top:411px" width="10" height="13"><rect x="0.2" y="0" width="9" height="13" fill="#464648"/></svg>
<svg class="a" style="left:228.8px;top:416.4px;" width="4.6" height="2.6" viewBox="0 0 4.6 2.6"><path d="M0 0h4.6l-2.3 2.6z" fill="#f0f0f0"/></svg>
<span class="t " style="left:11px;top:433px;font-size:8.2px;color:#e4e4e4;transform:scaleX(1.0155);">Is sub-program</span>
<svg class="a" style="left:10px;top:442px" width="227" height="16"><rect x="0.8" y="0.5" width="225.4" height="15.3" fill="#2c2c2f"/><rect x="1.3" y="1" width="224.4" height="14.3" fill="none" stroke="#656567" stroke-width="1"/></svg>
<svg class="a" style="left:226px;top:443px" width="10" height="14"><rect x="0.2" y="0.5" width="9" height="13.3" fill="#464648"/></svg>
<svg class="a" style="left:228.8px;top:449.04999999999995px;" width="4.6" height="2.6" viewBox="0 0 4.6 2.6"><path d="M0 0h4.6l-2.3 2.6z" fill="#f0f0f0"/></svg>
<svg class="a" style="left:114px;top:468px" width="58" height="19"><rect x="0" y="0.2" width="57.8" height="18.6" fill="#2f2f31"/><rect x="0.5" y="0.7" width="56.8" height="17.6" fill="none" stroke="#5d5d5f" stroke-width="1"/></svg>
<span class="t " style="left:132.65px;top:475px;font-size:8.2px;color:#e8e8e8;transform:scaleX(1.0461);">Clear</span>
<svg class="a" style="left:178px;top:468px" width="58" height="19"><rect x="0" y="0.2" width="58" height="18.6" fill="#2f2f31"/><rect x="0.5" y="0.7" width="57" height="17.6" fill="none" stroke="#5d5d5f" stroke-width="1"/></svg>
<span class="t " style="left:193.75px;top:475px;font-size:8.2px;color:#e8e8e8;transform:scaleX(1.0199);">Search</span>
<svg class="a" style="left:6px;top:495px" width="231" height="14"><rect x="0.2" y="0.9" width="230" height="13" fill="#333337"/></svg>
<svg class="a" style="left:6px;top:509px" width="231" height="2"><rect x="0.2" y="0" width="230" height="1.3" fill="#0479cf"/></svg>
<svg class="a" style="left:10px;top:497px" width="10" height="10"><rect x="0.8" y="0.8" width="8.5" height="8.3" fill="#3a3a3c"/><rect x="1.3" y="1.3" width="7.5" height="7.3" fill="none" stroke="#656567" stroke-width="1"/></svg>
<span class="t " style="left:21.8px;top:500px;font-size:8.2px;color:#f0f0f0;transform:scaleX(0.9832);">Advanced search</span>
<svg class="a" style="left:248px;top:115px" width="11" height="400"><rect x="0" y="0.5" width="10.5" height="399" fill="#343437"/></svg>
<svg class="a" style="left:248px;top:504px" width="11" height="11"><rect x="0" y="0.3" width="10.5" height="10.2" fill="#48484a"/></svg>
<svg class="a" style="left:248px;top:254px" width="11" height="250"><rect x="0" y="0.6" width="10.5" height="249" fill="#5b5b5d"/></svg>
<svg class="a" style="left:248px;top:116px" width="11" height="12"><rect x="0" y="0" width="10.5" height="11.5" fill="#4a4a4c"/></svg>
<svg class="a" style="left:250.3px;top:119.5px;" width="6" height="4" viewBox="0 0 6 4"><path d="M0 4L3 0l3 4z" fill="#a8a8a8"/></svg>
<svg class="a" style="left:250.3px;top:507.5px;" width="6" height="4" viewBox="0 0 6 4"><path d="M0 0L3 4l3-4z" fill="#b4b4b4"/></svg>
<svg class="a" style="left:258px;top:115px" width="5" height="402"><rect x="0.5" y="0.5" width="4.2" height="401" fill="#262628"/></svg>
<svg class="a" style="left:261px;top:115px" width="2" height="402"><rect x="0" y="0.5" width="1.6" height="401" fill="#19191a"/></svg>
<svg class="a" style="left:0px;top:516px" width="1000" height="15"><rect x="0" y="0.6" width="1000" height="14" fill="#0479cf"/></svg>
<span class="t " style="left:74.8px;top:522px;font-size:8px;color:#eaf4fc;transform:scaleX(0.9514);">Found 1 program.</span>
<span class="t " style="left:403px;top:522px;font-size:8px;color:#eaf4fc;transform:scaleX(0.9388);">ADMIN</span>
<span class="t " style="left:439.8px;top:522px;font-size:8px;color:#eaf4fc;transform:scaleX(0.8932);">Licensed to DEMO - NOT FOR RESALE - Solidcam America (USA)</span>
<span class="t " style="left:944.7px;top:522px;font-size:8px;color:#eaf4fc;transform:scaleX(0.9223);">INS</span>
<span class="t " style="left:962.8px;top:522px;font-size:8px;color:#eaf4fc;transform:scaleX(0.8510);">06:07:23</span>
<svg class="a" style="left:262px;top:115px" width="738" height="150"><rect x="0.7" y="0.5" width="737.3" height="149" fill="#2b2b2e"/></svg>
<svg class="a" style="left:262px;top:116px" width="738" height="15"><rect x="0.7" y="0.2" width="737.3" height="13.9" fill="#3a3a3c"/></svg>
<svg class="a" style="left:460px;top:116px" width="1" height="14"><rect x="0" y="0.5" width="1" height="13" fill="#8c8c8e"/></svg>
<svg class="a" style="left:680px;top:116px" width="2" height="14"><rect x="0.8" y="0.5" width="1" height="13" fill="#8c8c8e"/></svg>
<svg class="a" style="left:748px;top:116px" width="1" height="14"><rect x="0" y="0.5" width="1" height="13" fill="#8c8c8e"/></svg>
<svg class="a" style="left:841px;top:116px" width="2" height="14"><rect x="0.5" y="0.5" width="1" height="13" fill="#8c8c8e"/></svg>
<svg class="a" style="left:908px;top:116px" width="2" height="14"><rect x="0.8" y="0.5" width="1" height="13" fill="#8c8c8e"/></svg>
<svg class="a" style="left:964px;top:116px" width="2" height="14"><rect x="0.6" y="0.5" width="1" height="13" fill="#8c8c8e"/></svg>
<span class="t " style="left:267px;top:120px;font-size:8.2px;color:#bdbdbd;transform:scaleX(0.9859);">Program</span>
<span class="t " style="left:465px;top:120px;font-size:8.2px;color:#bdbdbd;transform:scaleX(0.9937);">Machine</span>
<span class="t " style="left:685.7px;top:120px;font-size:8.2px;color:#bdbdbd;transform:scaleX(0.9507);">Status</span>
<span class="t " style="left:752.2px;top:120px;font-size:8.2px;color:#bdbdbd;transform:scaleX(1.0155);">Import</span>
<span class="t " style="left:846px;top:120px;font-size:8.2px;color:#bdbdbd;transform:scaleX(0.9833);">Locked</span>
<span class="t " style="left:913.3px;top:120px;font-size:8.2px;color:#bdbdbd;transform:scaleX(0.9832);">Part Number</span>
<span class="t " style="left:968.8px;top:120px;font-size:8.2px;color:#bdbdbd;transform:scaleX(0.9708);">Drawing</span>
<svg class="a" style="left:262px;top:130px" width="738" height="13"><rect x="0.7" y="0.1" width="737.3" height="12.5" fill="#0479cf"/></svg>
<svg class="a" style="left:266px;top:135px" width="5" height="3"><rect x="0" y="0.6" width="5" height="1.5" fill="#ecd8b4"/></svg>
<span class="t " style="left:275.8px;top:133px;font-size:8.2px;color:#ffffff;transform:scaleX(0.9937);">IMPELLER_IMTS</span>
<span class="t " style="left:465px;top:133px;font-size:8.2px;color:#ffffff;transform:scaleX(0.9829);">Hurco</span>
<span class="t " style="left:685.7px;top:133px;font-size:8.2px;color:#ffffff;transform:scaleX(0.9732);">Ready to Run</span>
<span class="t " style="left:752.2px;top:133px;font-size:8.2px;color:#ffffff;transform:scaleX(0.9826);">No</span>
<span class="t " style="left:846px;top:133px;font-size:8.2px;color:#ffffff;transform:scaleX(0.9826);">No</span>
<span class="t " style="left:913.3px;top:133px;font-size:8.2px;color:#ffffff;transform:scaleX(0.9810);">PN04-1068</span>
<span class="t " style="left:968.8px;top:133px;font-size:8.2px;color:#ffffff;transform:scaleX(0.9453);">DWG10689</span>
<div class="a" style="left:283px;top:143px;width:1px;height:85px;border-left:1px dotted #3c3c3e;"></div>
<span class="t " style="left:299.7px;top:146px;font-size:8.2px;color:#efefef;">Impeller_IMTS.FNC</span>
<svg class="a" style="left:288.3px;top:144.3px;" width="9" height="10.5" viewBox="0 0 9 10.5"><path d="M.5 .5h5.500l2.500 2.500v7h-8z" fill="#f4f6fb" stroke="#8a9cc0" stroke-width=".5"/><rect x="1.300" y="4.200" width="6" height="4.800" fill="#c9212c"/><path d="M2.500 2.200h2.500" stroke="#2e9a48" stroke-width="1"/><path d="M2.600 5.500v2.500M4.300 5.500h2v2.500h-2z" fill="none" stroke="#fff" stroke-width=".6"/></svg>
<span class="t " style="left:299.7px;top:160px;font-size:8.2px;color:#efefef;transform:scaleX(0.9869);">Hurco VMX 30Ui.MacBundle</span>
<svg class="a" style="left:288px;top:157.38000000000002px;" width="10" height="10.4" viewBox="0 0 10 10.4"><rect width="10" height="10.400" fill="#dd1f2b"/><g stroke="#fff" stroke-width="1.100" stroke-linecap="round"><path d="M5 2v6.400M2 5.200h6M2.800 3l4.400 4.400M7.200 3L2.800 7.400"/></g></svg>
<span class="t " style="left:299.7px;top:173px;font-size:8.2px;color:#efefef;transform:scaleX(0.9850);">Impeller_IMTS_Fixture_Stock.stl</span>
<svg class="a" style="left:288.8px;top:171.35999999999999px;" width="7" height="8.5" viewBox="0 0 7 8.5"><path d="M.4 .4h3.800l2.400 2.400v5.300h-6.200z" fill="#f4f4f4" stroke="#3a3a3c" stroke-width=".5"/><path d="M4.200 .4v2.400h2.400z" fill="#555"/><path d="M1.800 4h2.600M1.800 5.600h3.400" stroke="#555" stroke-width=".8"/></svg>
<span class="t " style="left:299.7px;top:186px;font-size:8.2px;color:#efefef;">Impeller_IMTS_Fixture_Target.stl</span>
<svg class="a" style="left:288.8px;top:184.44px;" width="7" height="8.5" viewBox="0 0 7 8.5"><path d="M.4 .4h3.800l2.400 2.400v5.300h-6.200z" fill="#f4f4f4" stroke="#3a3a3c" stroke-width=".5"/><path d="M4.200 .4v2.400h2.400z" fill="#555"/><path d="M1.800 4h2.600M1.800 5.600h3.400" stroke="#555" stroke-width=".8"/></svg>
<span class="t " style="left:299.7px;top:199px;font-size:8.2px;color:#efefef;transform:scaleX(0.9934);">Impeller_IMTS_Fixture.stl</span>
<svg class="a" style="left:288.8px;top:197.51999999999998px;" width="7" height="8.5" viewBox="0 0 7 8.5"><path d="M.4 .4h3.800l2.400 2.400v5.300h-6.200z" fill="#f4f4f4" stroke="#3a3a3c" stroke-width=".5"/><path d="M4.200 .4v2.400h2.400z" fill="#555"/><path d="M1.800 4h2.600M1.800 5.600h3.400" stroke="#555" stroke-width=".8"/></svg>
<span class="t " style="left:299.7px;top:212px;font-size:8.2px;color:#efefef;">Impeller_IMTS.CimcoSimData</span>
<svg class="a" style="left:288.8px;top:210.6px;" width="7" height="8.5" viewBox="0 0 7 8.5"><path d="M.4 .4h3.800l2.400 2.400v5.300h-6.200z" fill="#f4f4f4" stroke="#3a3a3c" stroke-width=".5"/><path d="M4.200 .4v2.400h2.400z" fill="#555"/><path d="M1.800 4h2.600M1.800 5.600h3.400" stroke="#555" stroke-width=".8"/></svg>
<span class="t " style="left:299.7px;top:225px;font-size:8.2px;color:#efefef;transform:scaleX(0.9914);">Impeller_IMTS.setup</span>
<svg class="a" style="left:288.8px;top:223.68px;" width="7" height="8.5" viewBox="0 0 7 8.5"><path d="M.4 .4h3.800l2.400 2.400v5.300h-6.200z" fill="#f4f4f4" stroke="#3a3a3c" stroke-width=".5"/><path d="M4.200 .4v2.400h2.400z" fill="#555"/><path d="M1.800 4h2.600M1.800 5.600h3.400" stroke="#555" stroke-width=".8"/></svg>
<span class="t " style="left:465px;top:146px;font-size:8.2px;color:#efefef;transform:scaleX(0.9841);">Program file</span>
<svg class="a" style="left:262px;top:264px" width="738" height="11"><rect x="0.7" y="0.5" width="737.3" height="10.2" fill="#39393b"/></svg>
<svg class="a" style="left:262px;top:264px" width="12" height="11"><rect x="0.7" y="0.5" width="11.3" height="10.2" fill="#4b4b4d"/></svg>
<svg class="a" style="left:990px;top:264px" width="10" height="11"><rect x="0.7" y="0.5" width="9.3" height="10.2" fill="#4b4b4d"/></svg>
<svg class="a" style="left:275px;top:264px" width="487" height="11"><rect x="0" y="0.5" width="486.5" height="10.2" fill="#565658"/></svg>
<svg class="a" style="left:266.3px;top:266.6px;" width="4" height="6" viewBox="0 0 4 6"><path d="M4 0L0 3l4 3z" fill="#d0d0d0"/></svg>
<svg class="a" style="left:993.5px;top:266.6px;" width="4" height="6" viewBox="0 0 4 6"><path d="M0 0l4 3-4 3z" fill="#b0b0b0"/></svg>
<svg class="a" style="left:262px;top:274px" width="738" height="4"><rect x="0.7" y="0.7" width="737.3" height="2.8" fill="#19191a"/></svg>
<svg class="a" style="left:266px;top:283px" width="81" height="18"><rect x="0.8" y="0.4" width="80.2" height="17.1" fill="#2f2f31"/><rect x="1.3" y="0.9" width="79.2" height="16.1" fill="none" stroke="#5d5d5f" stroke-width="1"/></svg>
<span class="t " style="left:291.59999999999997px;top:289px;font-size:8.2px;color:#e8e8e8;transform:scaleX(0.8607);">Open File</span>
<svg class="a" style="left:350px;top:283px" width="20" height="18"><rect x="0.5" y="0.4" width="19.2" height="17.1" fill="#2f2f31"/><rect x="1" y="0.9" width="18.2" height="16.1" fill="none" stroke="#5d5d5f" stroke-width="1"/></svg>
<span class="t " style="left:357.35px;top:289px;font-size:8.2px;color:#e8e8e8;transform:scaleX(0.8048);">...</span>
<span class="t " style="left:380px;top:290px;font-size:8.2px;color:#ececec;transform:scaleX(0.9949);">File: Machines\Hurco\Programs\Impeller_IMTS.FNC</span>
<span class="t " style="left:640.9px;top:290px;font-size:8.2px;color:#ececec;transform:scaleX(0.9817);">Size: 73.449.909 / 186564m</span>
<span class="t " style="left:755.7px;top:290px;font-size:8.2px;color:#ececec;transform:scaleX(0.9811);">Modified: 08/09/2024 17:20:28</span>
<span class="t " style="left:877.7px;top:290px;font-size:8.2px;color:#ececec;transform:scaleX(0.9764);">Created: 08/09/2024 17:20:28</span>
<svg class="a" style="left:262px;top:304px" width="738" height="1"><rect x="0.7" y="0" width="737.3" height="1" fill="#39393c"/></svg>
<svg class="a" style="left:266px;top:309px" width="731" height="177"><rect x="0.8" y="0.5" width="730" height="176" fill="#2b2b2e"/><rect x="1.3" y="1" width="729" height="175" fill="none" stroke="#48484a" stroke-width="1"/></svg>
<svg class="a" style="left:267px;top:310px" width="720" height="14"><rect x="0.8" y="0.5" width="718.6" height="12.7" fill="#3a3a3c"/></svg>
<svg class="a" style="left:332px;top:310px" width="2" height="14"><rect x="0.8" y="0.8" width="1" height="12.4" fill="#8c8c8e"/></svg>
<svg class="a" style="left:418px;top:310px" width="2" height="14"><rect x="0.2" y="0.8" width="1" height="12.4" fill="#8c8c8e"/></svg>
<svg class="a" style="left:456px;top:310px" width="1" height="14"><rect x="0" y="0.8" width="1" height="12.4" fill="#8c8c8e"/></svg>
<span class="t " style="left:271.6px;top:313px;font-size:8.2px;color:#bdbdbd;transform:scaleX(0.9588);">User</span>
<span class="t " style="left:337.5px;top:313px;font-size:8.2px;color:#bdbdbd;transform:scaleX(0.9934);">Time</span>
<span class="t " style="left:425px;top:313px;font-size:8.2px;color:#bdbdbd;transform:scaleX(1.0054);">Version</span>
<span class="t " style="left:461.9px;top:313px;font-size:8.2px;color:#bdbdbd;transform:scaleX(1.0706);">Text</span>
<svg class="a" style="left:267px;top:323px" width="720" height="12"><rect x="0.8" y="0.3" width="718.6" height="11.2" fill="#0479cf"/></svg>
<div class="a" style="left:267.800px;top:310.500px;width:728px;height:174px;overflow:hidden">
<span class="t " style="left:3.599999999999966px;top:15px;font-size:8.2px;color:#ffffff;transform:scaleX(0.9916);">ADMIN</span>
<span class="t " style="left:69.5px;top:15px;font-size:8.2px;color:#ffffff;transform:scaleX(0.9875);">08/09/2024 22:40:48</span>
<span class="t " style="left:181.59999999999997px;top:15px;font-size:8.2px;color:#ffffff;">1</span>
<span class="t " style="left:194.09999999999997px;top:15px;font-size:8.2px;color:#ffffff;transform:scaleX(0.9672);">Program Status: Ready to Run</span>
<span class="t " style="left:3.599999999999966px;top:27px;font-size:8.2px;color:#efefef;transform:scaleX(0.9916);">ADMIN</span>
<span class="t " style="left:69.5px;top:27px;font-size:8.2px;color:#efefef;transform:scaleX(0.9875);">08/09/2024 22:27:23</span>
<span class="t " style="left:181.59999999999997px;top:27px;font-size:8.2px;color:#efefef;">1</span>
<span class="t " style="left:194.09999999999997px;top:27px;font-size:8.2px;color:#efefef;transform:scaleX(0.9854);">Received program rejected: Other changes</span>
<span class="t " style="left:3.599999999999966px;top:39px;font-size:8.2px;color:#efefef;">DNCMAX</span>
<span class="t " style="left:69.5px;top:39px;font-size:8.2px;color:#efefef;transform:scaleX(0.9875);">08/09/2024 22:26:44</span>
<span class="t " style="left:181.59999999999997px;top:39px;font-size:8.2px;color:#efefef;">1</span>
<span class="t " style="left:194.09999999999997px;top:39px;font-size:8.2px;color:#efefef;transform:scaleX(0.9858);">Program received by DNC awaiting approval</span>
<span class="t " style="left:3.599999999999966px;top:51px;font-size:8.2px;color:#efefef;">DNCMAX</span>
<span class="t " style="left:69.5px;top:51px;font-size:8.2px;color:#efefef;transform:scaleX(0.9875);">08/09/2024 22:26:44</span>
<span class="t " style="left:181.59999999999997px;top:51px;font-size:8.2px;color:#efefef;">1</span>
<span class="t " style="left:194.09999999999997px;top:51px;font-size:8.2px;color:#efefef;transform:scaleX(0.9839);">Program locked</span>
<span class="t " style="left:3.599999999999966px;top:62px;font-size:8.2px;color:#efefef;">DNCMAX</span>
<span class="t " style="left:69.5px;top:62px;font-size:8.2px;color:#efefef;transform:scaleX(0.9875);">08/09/2024 22:26:43</span>
<span class="t " style="left:181.59999999999997px;top:62px;font-size:8.2px;color:#efefef;">1</span>
<span class="t " style="left:194.09999999999997px;top:62px;font-size:8.2px;color:#efefef;transform:scaleX(0.9812);">File added to import queue by DNC: Port Hurco VMX30 Ui</span>
<span class="t " style="left:3.599999999999966px;top:74px;font-size:8.2px;color:#efefef;transform:scaleX(0.9916);">ADMIN</span>
<span class="t " style="left:69.5px;top:74px;font-size:8.2px;color:#efefef;transform:scaleX(0.9875);">08/09/2024 22:26:04</span>
<span class="t " style="left:181.59999999999997px;top:74px;font-size:8.2px;color:#efefef;">1</span>
<span class="t " style="left:194.09999999999997px;top:74px;font-size:8.2px;color:#efefef;transform:scaleX(0.9730);">File sent by DNC: Port Hurco VMX30 Ui</span>
<span class="t " style="left:3.599999999999966px;top:86px;font-size:8.2px;color:#efefef;transform:scaleX(0.9916);">ADMIN</span>
<span class="t " style="left:69.5px;top:86px;font-size:8.2px;color:#efefef;transform:scaleX(0.9875);">08/09/2024 19:43:44</span>
<span class="t " style="left:181.59999999999997px;top:86px;font-size:8.2px;color:#efefef;">1</span>
<span class="t " style="left:194.09999999999997px;top:86px;font-size:8.2px;color:#efefef;transform:scaleX(0.9854);">Received program rejected: Other changes</span>
<span class="t " style="left:3.599999999999966px;top:98px;font-size:8.2px;color:#efefef;">DNCMAX</span>
<span class="t " style="left:69.5px;top:98px;font-size:8.2px;color:#efefef;transform:scaleX(0.9875);">08/09/2024 19:31:01</span>
<span class="t " style="left:181.59999999999997px;top:98px;font-size:8.2px;color:#efefef;">1</span>
<span class="t " style="left:194.09999999999997px;top:98px;font-size:8.2px;color:#efefef;transform:scaleX(0.9858);">Program received by DNC awaiting approval</span>
<span class="t " style="left:3.599999999999966px;top:109px;font-size:8.2px;color:#efefef;">DNCMAX</span>
<span class="t " style="left:69.5px;top:109px;font-size:8.2px;color:#efefef;transform:scaleX(0.9875);">08/09/2024 19:31:01</span>
<span class="t " style="left:181.59999999999997px;top:109px;font-size:8.2px;color:#efefef;">1</span>
<span class="t " style="left:194.09999999999997px;top:109px;font-size:8.2px;color:#efefef;transform:scaleX(0.9839);">Program locked</span>
<span class="t " style="left:3.599999999999966px;top:121px;font-size:8.2px;color:#efefef;">DNCMAX</span>
<span class="t " style="left:69.5px;top:121px;font-size:8.2px;color:#efefef;transform:scaleX(0.9875);">08/09/2024 19:31:01</span>
<span class="t " style="left:181.59999999999997px;top:121px;font-size:8.2px;color:#efefef;">1</span>
<span class="t " style="left:194.09999999999997px;top:121px;font-size:8.2px;color:#efefef;transform:scaleX(0.9812);">File added to import queue by DNC: Port Hurco VMX30 Ui</span>
<span class="t " style="left:3.599999999999966px;top:133px;font-size:8.2px;color:#efefef;transform:scaleX(0.9916);">ADMIN</span>
<span class="t " style="left:69.5px;top:133px;font-size:8.2px;color:#efefef;transform:scaleX(0.9875);">08/09/2024 19:30:28</span>
<span class="t " style="left:181.59999999999997px;top:133px;font-size:8.2px;color:#efefef;">1</span>
<span class="t " style="left:194.09999999999997px;top:133px;font-size:8.2px;color:#efefef;transform:scaleX(0.9854);">Received program rejected: Other changes</span>
<span class="t " style="left:3.599999999999966px;top:145px;font-size:8.2px;color:#efefef;">DNCMAX</span>
<span class="t " style="left:69.5px;top:145px;font-size:8.2px;color:#efefef;transform:scaleX(0.9875);">08/09/2024 19:24:19</span>
<span class="t " style="left:181.59999999999997px;top:145px;font-size:8.2px;color:#efefef;">1</span>
<span class="t " style="left:194.09999999999997px;top:145px;font-size:8.2px;color:#efefef;transform:scaleX(0.9858);">Program received by DNC awaiting approval</span>
<span class="t " style="left:3.599999999999966px;top:157px;font-size:8.2px;color:#efefef;">DNCMAX</span>
<span class="t " style="left:69.5px;top:157px;font-size:8.2px;color:#efefef;transform:scaleX(0.9875);">08/09/2024 19:24:19</span>
<span class="t " style="left:181.59999999999997px;top:157px;font-size:8.2px;color:#efefef;">1</span>
<span class="t " style="left:194.09999999999997px;top:157px;font-size:8.2px;color:#efefef;transform:scaleX(0.9839);">Program locked</span>
<span class="t " style="left:3.599999999999966px;top:168px;font-size:8.2px;color:#efefef;">DNCMAX</span>
<span class="t " style="left:69.5px;top:168px;font-size:8.2px;color:#efefef;transform:scaleX(0.9875);">08/09/2024 19:24:19</span>
<span class="t " style="left:181.59999999999997px;top:168px;font-size:8.2px;color:#efefef;">1</span>
<span class="t " style="left:194.09999999999997px;top:168px;font-size:8.2px;color:#efefef;transform:scaleX(0.9812);">File added to import queue by DNC: Port Hurco VMX30 Ui</span>
</div>
<svg class="a" style="left:986px;top:310px" width="11" height="175"><rect x="0.4" y="0.5" width="10.4" height="174" fill="#343436"/></svg>
<svg class="a" style="left:986px;top:310px" width="11" height="12"><rect x="0.4" y="0.5" width="10.4" height="11.5" fill="#4b4b4d"/></svg>
<svg class="a" style="left:986px;top:473px" width="11" height="12"><rect x="0.4" y="0.8" width="10.4" height="10.7" fill="#4b4b4d"/></svg>
<svg class="a" style="left:986px;top:322px" width="11" height="34"><rect x="0.4" y="0.5" width="10.4" height="33.3" fill="#5b5b5d"/></svg>
<svg class="a" style="left:988px;top:313.2px;" width="7" height="4.3" viewBox="0 0 7 4.3"><path d="M0 4.300L3.500 0l3.500 4.300z" fill="#c4c4c4"/></svg>
<svg class="a" style="left:988.3px;top:477px;" width="6" height="4" viewBox="0 0 6 4"><path d="M0 0L3 4l3-4z" fill="#d0d0d0"/></svg>
<svg class="a" style="left:266px;top:491px" width="81" height="18"><rect x="0.6" y="0.7" width="80.4" height="17.1" fill="#2f2f31"/><rect x="1.1" y="1.2" width="79.4" height="16.1" fill="none" stroke="#5d5d5f" stroke-width="1"/></svg>
<span class="t " style="left:285.5px;top:497px;font-size:8.2px;color:#e8e8e8;transform:scaleX(0.8760);">Change View</span>
<svg class="a" style="left:354px;top:491px" width="82" height="18"><rect x="0.8" y="0.7" width="81.2" height="17.1" fill="#2f2f31"/><rect x="1.3" y="1.2" width="80.2" height="16.1" fill="none" stroke="#5d5d5f" stroke-width="1"/></svg>
<span class="t " style="left:378.7px;top:497px;font-size:8.2px;color:#e8e8e8;transform:scaleX(0.8829);">Edit Notes</span>
<svg class="a" style="left:652px;top:491px" width="81" height="18"><rect x="0" y="0.7" width="80.4" height="17.1" fill="#2f2f31"/><rect x="0.5" y="1.2" width="79.4" height="16.1" fill="none" stroke="#5d5d5f" stroke-width="1"/></svg>
<span class="t " style="left:668.0500000000001px;top:497px;font-size:8.2px;color:#e8e8e8;transform:scaleX(0.8904);">Version Report</span>
<svg class="a" style="left:740px;top:491px" width="81" height="18"><rect x="0.3" y="0.7" width="80.3" height="17.1" fill="#2f2f31"/><rect x="0.8" y="1.2" width="79.3" height="16.1" fill="none" stroke="#5d5d5f" stroke-width="1"/></svg>
<span class="t " style="left:767.8000000000001px;top:497px;font-size:8.2px;color:#e8e8e8;transform:scaleX(0.8811);">Restore</span>
<svg class="a" style="left:829px;top:491px" width="81" height="18"><rect x="0" y="0.7" width="80.4" height="17.1" fill="#2f2f31"/><rect x="0.5" y="1.2" width="79.4" height="16.1" fill="none" stroke="#5d5d5f" stroke-width="1"/></svg>
<span class="t " style="left:845.2px;top:497px;font-size:8.2px;color:#e8e8e8;transform:scaleX(0.8631);">Show Changes</span>
<svg class="a" style="left:917px;top:491px" width="81" height="18"><rect x="0.3" y="0.7" width="80.2" height="17.1" fill="#2f2f31"/><rect x="0.8" y="1.2" width="79.2" height="16.1" fill="none" stroke="#5d5d5f" stroke-width="1"/></svg>
<span class="t " style="left:942.5px;top:497px;font-size:8.2px;color:#e8e8e8;transform:scaleX(0.8836);">Compare</span>
<svg class="a" style="left:425px;top:252.3px;" width="7.7" height="11" viewBox="0 0 7 10"><path d="M.4 .4v8l1.900-1.700 1.300 2.900 1.100-.5-1.300-2.800h2.500z" fill="#fff" stroke="#222" stroke-width=".5"/></svg>
</div></body></html>
